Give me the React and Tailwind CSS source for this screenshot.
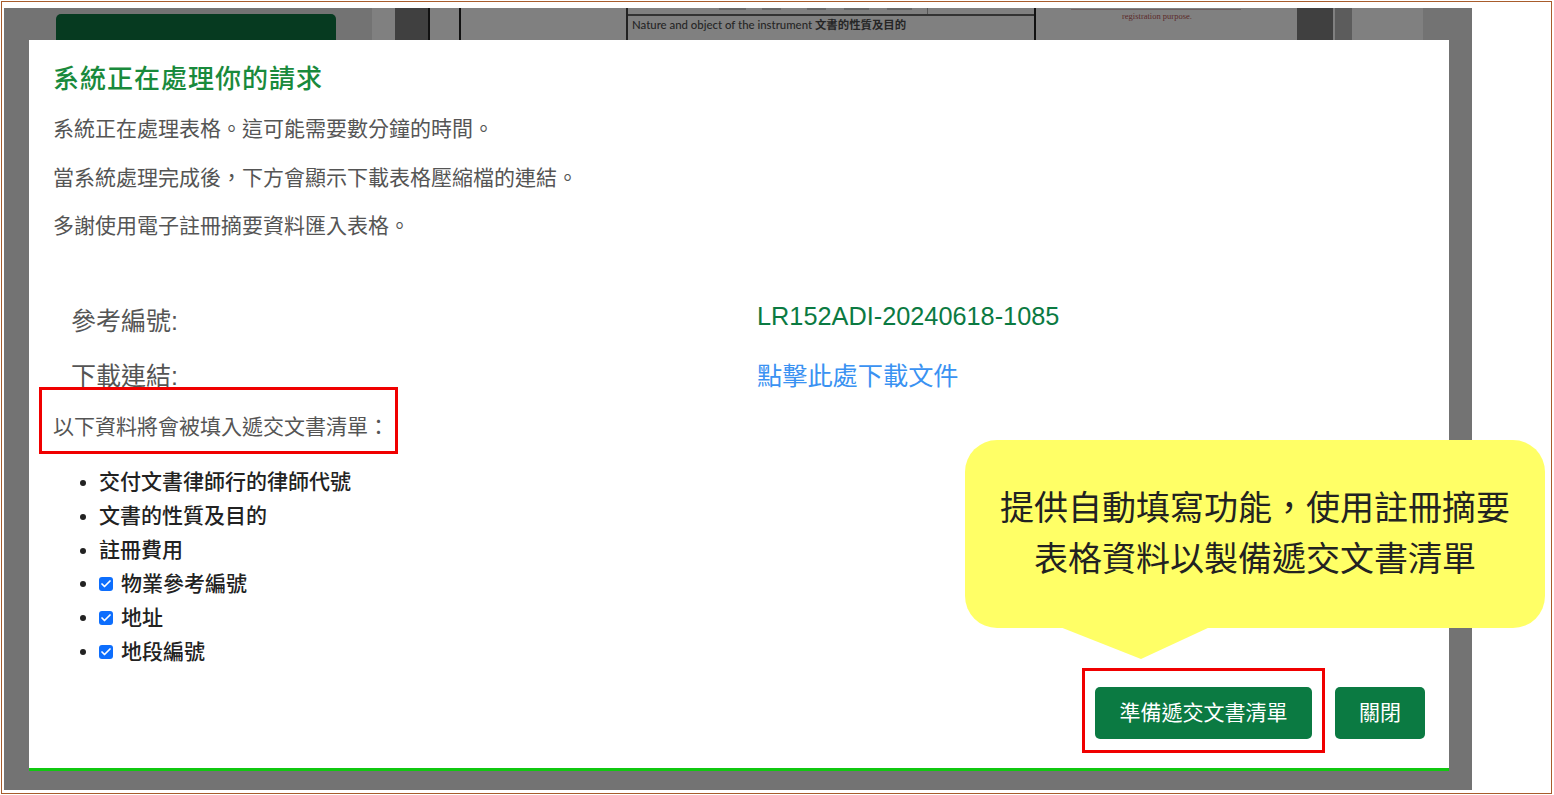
import { Check } from 'lucide-react';

const cjk = 'font-["Liberation_Sans","Noto_Sans_CJK_TC",sans-serif]';

const fields = [
  { label: '物業參考編號', checked: true },
  { label: '地址', checked: true },
  { label: '地段編號', checked: true },
];

// cut-off figures of the page under the modal, too blurred to read
const smudges = ['w-[27px] ml-[91px]', 'w-[19px] ml-[16px]', 'w-[19px] ml-[26px]', 'w-[25px] ml-[18px]', 'w-[25px] ml-[18px]'];

const PageBehind = () => (
  <div className="flex h-[32px] overflow-hidden bg-[#808080]">
    <div className="w-[368px] h-full bg-[#737373] pl-[52px] pt-[6px] pr-[36px] flex-none">
      <div className="h-full bg-[#063a20] rounded-t-[5px]"></div>
    </div>
    <div className="w-[23px] flex-none"></div>
    <div className="w-[35px] bg-[#404040] border-r-2 border-[#111] flex-none"></div>
    <div className="w-[31px] flex-none border-r-2 border-[#111]"></div>
    <div className="w-[167px] flex-none border-r-2 border-[#222]"></div>
    <div className="w-[408px] flex-none border-r-2 border-[#111]">
      <div className="h-[8px] border-b-2 border-[#333] flex items-start">
        {smudges.map((s) => (
          <span key={s} className={`h-[2px] bg-[#666] flex-none ${s}`}></span>
        ))}
        <span className="w-px h-[6px] ml-[15px] bg-[#555] flex-none"></span>
      </div>
      <div className="text-[11.4px] leading-[16px] pl-[4px] pt-[1px] font-medium text-[#262626] font-['Lato','Noto_Sans_CJK_TC',sans-serif]">
        Nature and object of the instrument <span className="font-bold">文書的性質及目的</span>
      </div>
    </div>
    <div className="w-[261px] flex-none">
      <div className="h-px mt-[1px] ml-[35px] w-[170px] bg-[#6e6060]"></div>
      <div className="text-[8.5px] leading-[12px] pl-[86px] text-[#5c2a2a] font-['Liberation_Serif',serif]">
        registration purpose.
      </div>
    </div>
    <div className="w-[36px] bg-[#404040] flex-none"></div>
    <div className="w-[17px] ml-[2px] bg-[#5c5c5c] flex-none"></div>
    <div className="flex-1"></div>
    <div className="w-[49px] bg-[#737373] flex-none"></div>
  </div>
);

const App = () => {
  return (
    <div className={`relative w-[1554px] h-[795px] overflow-hidden bg-white p-px ${cjk}`}>
      <div className="h-full w-[1551px] border border-[#a85c2c] pl-[2px] pt-[6px]">
        <div className="w-[1468px] h-[782px] bg-[#737373]">
          <PageBehind />

          <div className="ml-[25px] w-[1420px] h-[731px] bg-white border-b-[3px] border-[#10c810] px-[24px] pt-[24px] flex flex-col">
            <h1 className="text-[26px] leading-[30px] font-medium text-[#198a3c] tracking-[1px]">系統正在處理你的請求</h1>

            <div className="mt-[20px] text-[21px] leading-[30px] text-[#555] flex flex-col gap-[18.5px]">
              <p>系統正在處理表格。這可能需要數分鐘的時間。</p>
              <p>當系統處理完成後，下方會顯示下載表格壓縮檔的連結。</p>
              <p>多謝使用電子註冊摘要資料匯入表格。</p>
            </div>

            <div className="mt-[59px] pl-[18px] flex text-[25px] leading-[32px]">
              <div className="w-[686px] text-[#555] pt-[5px]">參考編號:</div>
              <div className="text-[#0b7a42] text-[25.3px]">LR152ADI-20240618-1085</div>
            </div>
            <div className="mt-[23px] pl-[18px] flex text-[25px] leading-[32px]">
              <div className="w-[686px] text-[#555]">下載連結:</div>
              <a className="text-[#3a92f2] text-[25.2px]">點擊此處下載文件</a>
            </div>

            <div className="-ml-[14px] mt-[-5px] flex-none w-[359px] h-[67px] border-[3px] border-[#f00000] pl-[11px] pt-[13px] flex items-center text-[21px] text-[#555]">
              以下資料將會被填入遞交文書清單：
            </div>

            <ul className="mt-[11px] pl-[46px] list-disc text-[21px] leading-[34px] font-medium text-[#222]">
              <li className="h-[33.8px]">交付文書律師行的律師代號</li>
              <li className="h-[33.8px]">文書的性質及目的</li>
              <li className="h-[33.8px]">註冊費用</li>
              {fields.map((f) => (
                <li key={f.label} className="h-[33.8px]">
                  <span className="inline-flex items-center gap-[8px] h-[34px] pt-[2px] align-top">
                    <span className="w-[14px] h-[14px] rounded-[3px] bg-[#0d6efd] flex items-center justify-center">
                      <Check className="w-[12px] h-[12px] text-white" strokeWidth={3.5} />
                    </span>
                    {f.label}
                  </span>
                </li>
              ))}
            </ul>

            <div className="mt-auto mb-[18px] flex justify-end items-start gap-[10px]">
              <div className="border-[3px] border-[#f00000] pt-[16px] pb-[11px] px-[10px]">
                <button className="block w-[217px] h-[52px] bg-[#0b7a42] text-white text-[21px] rounded-[5px]">準備遞交文書清單</button>
              </div>
              <button className="mt-[19px] w-[90px] h-[52px] bg-[#0b7a42] text-white text-[21px] rounded-[5px]">關閉</button>
            </div>
          </div>
        </div>
      </div>

      {/* callout sits over the modal */}
      <div className="absolute left-[965px] top-[440px] w-[580px] h-[188px] bg-[#ffff66] rounded-[32px] flex flex-col items-center pt-[43px] text-[34px] leading-[51px] text-[#222] font-['Liberation_Serif','Noto_Sans_CJK_TC',sans-serif]">
        <div>提供自動填寫功能，使用註冊摘要</div>
        <div>表格資料以製備遞交文書清單</div>
      </div>
      <svg className="absolute left-[1060px] top-[627px]" width="150" height="33" viewBox="0 0 150 33">
        <polygon points="0,0 150,0 81,32" fill="#ffff66" />
      </svg>
    </div>
  );
};

export default App;
